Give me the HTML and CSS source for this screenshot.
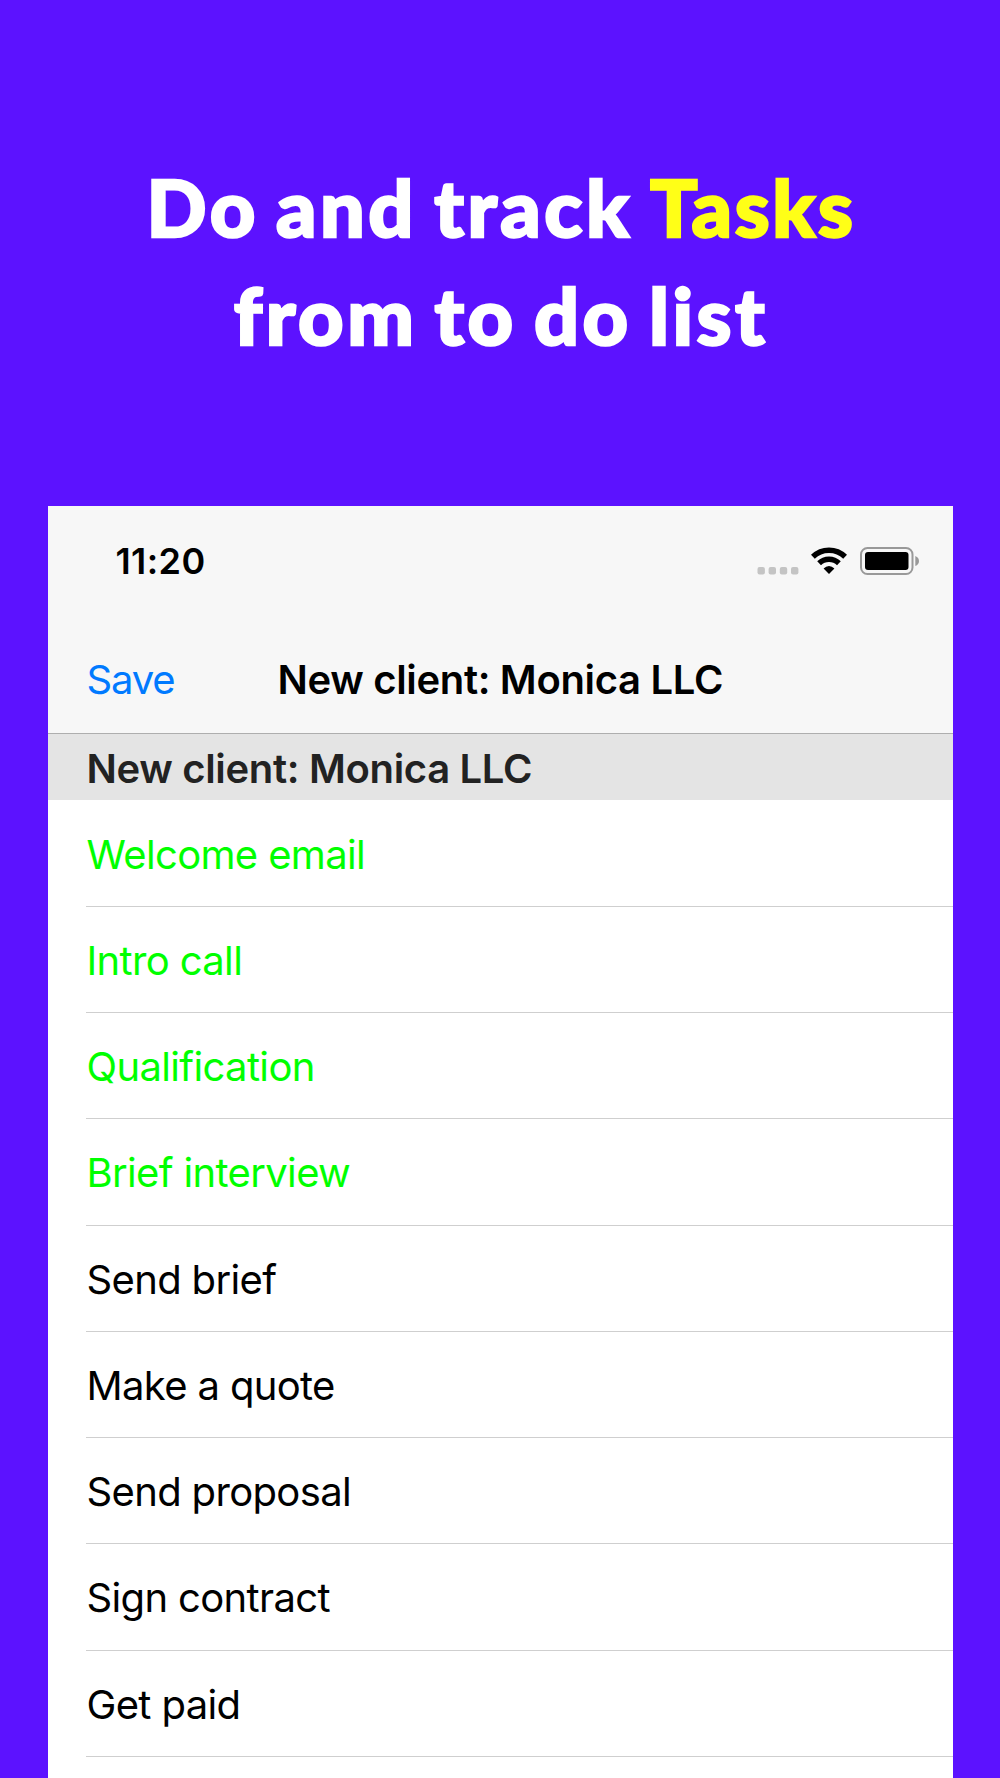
FILE: index.html
```html
<!DOCTYPE html>
<html lang="en">
<head>
    <meta charset="UTF-8">
    <meta name="viewport" content="width=device-width, initial-scale=1.0">
    <title>Tasks</title>
    <link rel="stylesheet" href="styles.css">
</head>
<body>
    <h1 class="headline">
        <span class="line line-one">Do and track <span class="highlight">Tasks</span></span>
        <span class="line line-two">from to do list</span>
    </h1>

    <main class="phone">
        <header class="top">
            <div class="status-bar">
                <span class="time">11:20</span>
                <div class="status-icons">
                    <svg class="signal" width="42" height="8" viewBox="0 0 42 8" fill="#c4c4c4">
                        <rect x="0.5" y="0" width="7.4" height="7.4" rx="2"/>
                        <rect x="11.6" y="0" width="7.4" height="7.4" rx="2"/>
                        <rect x="22.8" y="0" width="7.4" height="7.4" rx="2"/>
                        <rect x="34" y="0" width="7.4" height="7.4" rx="2"/>
                    </svg>
                    <svg class="wifi" width="38" height="28" viewBox="0 0 38 28">
                        <path d="M2.9 9.8A23 23 0 0 1 35.1 9.8" fill="none" stroke="#000" stroke-width="5.4"/>
                        <path d="M9.1 16.3A14.2 14.2 0 0 1 28.9 16.3" fill="none" stroke="#000" stroke-width="5.4"/>
                        <path d="M19 27L13.6 21.6Q16 19 19 19T24.4 21.6Z"/>
                    </svg>
                    <svg class="battery" width="60" height="28" viewBox="0 0 60 28">
                        <rect x="1" y="1" width="51.5" height="26" rx="6.5" fill="none" stroke="#999" stroke-width="2"/>
                        <rect x="5" y="5" width="43.5" height="18" rx="3" fill="#000"/>
                        <path d="M55.3 9Q59 10.5 59 14T55.3 19Z" fill="#999"/>
                    </svg>
                </div>
            </div>
            <nav class="nav-bar">
                <a class="save">Save</a>
                <h2 class="title">New client: Monica LLC</h2>
            </nav>
        </header>

        <h3 class="section">New client: Monica LLC</h3>
        <ul class="tasks">
            <li class="task done">Welcome email</li>
            <li class="task done">Intro call</li>
            <li class="task done">Qualification</li>
            <li class="task done">Brief interview</li>
            <li class="task">Send brief</li>
            <li class="task">Make a quote</li>
            <li class="task">Send proposal</li>
            <li class="task">Sign contract</li>
            <li class="task">Get paid</li>
        </ul>
    </main>
</body>
</html>
```
FILE: styles.css
```css
* {
    box-sizing: border-box;
}
body {
    margin: 0;
    height: 1778px;
    overflow: hidden;
    display: flex;
    flex-direction: column;
    background-color: #5c12ff;
    color: #000;
    font-family: Inter, "Liberation Sans", sans-serif;
}
.headline {
    margin: 0;
    padding-top: 153px;
    height: 505.5px;
    flex-shrink: 0;
    color: #fff;
    font-family: Lato, "Open Sans", sans-serif;
    font-size: 79px;
    font-weight: 900;
    line-height: 108px;
    text-align: center;
    word-spacing: -5px;
    -webkit-text-stroke: 2.4px currentColor;
}
.line {
    display: block;
    padding-left: 2px;
    letter-spacing: 3.5px;
    white-space: nowrap;
}
.highlight {
    color: #ffff17;
    letter-spacing: 2.6px;
}
.phone {
    flex: 1;
    margin: 0 47px 0 47.5px;
    background-color: #fff;
}
.top {
    height: 228.5px;
    background-color: #f7f7f7;
    border-bottom: 1px solid #aeaeae;
}
.status-bar {
    display: flex;
    justify-content: space-between;
    height: 121px;
    padding: 33px 33px 0 68px;
}
.time {
    font-size: 36px;
    font-weight: 600;
    letter-spacing: 0.4px;
    line-height: 44px;
}
.status-icons {
    display: flex;
    align-items: flex-end;
    height: 36px;
}
.wifi {
    margin-left: 11px;
}
.battery {
    margin-left: 12px;
}
.nav-bar {
    display: grid;
    grid-template-columns: 1fr auto 1fr;
    align-items: center;
    height: 106px;
    padding: 0 39px;
    line-height: 48px;
}
.save {
    color: #007aff;
    font-size: 40px;
    letter-spacing: -1.2px;
}
.title {
    margin: 0;
    font-size: 40px;
    font-weight: 600;
    letter-spacing: -0.33px;
}
.section {
    margin: 0;
    height: 66px;
    padding-left: 39px;
    background-color: #e4e4e4;
    color: #222;
    font-size: 40px;
    font-weight: 600;
    letter-spacing: -0.33px;
    line-height: 69px;
}
.tasks {
    margin: 0;
    padding: 0.5px 0 0 38.5px;
    list-style: none;
}
.task {
    height: 106.25px;
    border-bottom: 1px solid #cfcfcf;
    font-size: 40px;
    letter-spacing: -0.65px;
    line-height: 108.5px;
    text-indent: 0.5px;
}
.done {
    color: #00ff00;
}
```
